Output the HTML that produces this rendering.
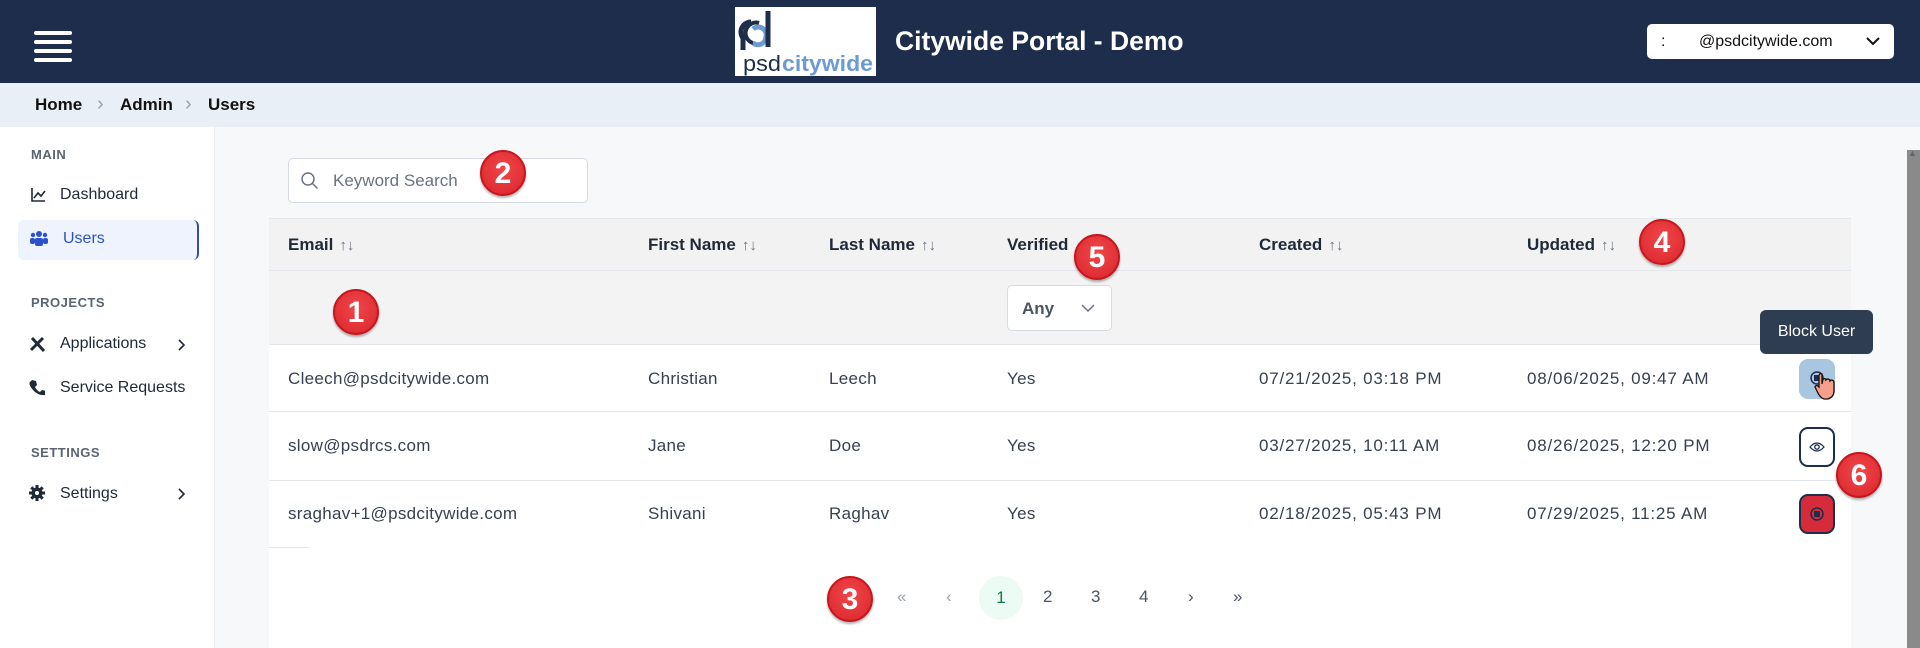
<!DOCTYPE html>
<html><head><meta charset="utf-8"><style>
*{box-sizing:border-box;margin:0;padding:0}
body{width:1920px;height:648px;overflow:hidden;background:#f7f8fa;font-family:"Liberation Sans",sans-serif;color:#1f2937;position:relative}
.abs{position:absolute}
.hdr{left:0;top:0;width:1920px;height:83px;background:#1d2d4b}
.bc{left:0;top:83px;width:1920px;height:44px;background:#e9eff6;font-size:17px;font-weight:bold;color:#111}
.side{left:0;top:127px;width:215px;height:521px;background:#fff;border-right:1px solid #eceef2}
.lbl{font-size:13px;color:#5b6472;font-weight:bold;letter-spacing:.5px}
.nav{font-size:16px;color:#1f2937}
.badge{width:46px;height:46px;border-radius:50%;background:radial-gradient(circle at 50% 40%,#f0464a,#d9262c);border:2px solid #c8161c;color:#fff;font-weight:bold;font-size:30px;text-align:center;line-height:44px;box-shadow:0 2px 2px rgba(0,0,0,.3)}
.th{font-size:17px;font-weight:bold;color:#1f2937}
.td{font-size:17px;color:#374151;letter-spacing:.3px}
.dt{letter-spacing:.8px}
.sort{color:#6b7280;font-weight:normal;font-size:15px;margin-left:6px}
.pg{font-size:17px;color:#4b5563}
.btn{width:36px;height:40px;border-radius:9px}
</style></head><body>
<div class="abs hdr"></div>
<div class="abs" style="left:34px;top:31px;width:38px">
<div style="height:4px;background:#fff;border-radius:2px;margin-bottom:5px"></div><div style="height:4px;background:#fff;border-radius:2px;margin-bottom:5px"></div><div style="height:4px;background:#fff;border-radius:2px;margin-bottom:5px"></div><div style="height:4px;background:#fff;border-radius:2px"></div></div>
<div class="abs" style="left:735px;top:7px;width:141px;height:69px;background:#fff">
<svg width="141" height="69" viewBox="0 0 141 69"><path d="M16 15a10 10 0 0 0-6 18" stroke="#1d2d4b" stroke-width="5" fill="none"/><path d="M8 30v13" stroke="#1d2d4b" stroke-width="5"/><path d="M18 22a8 8 0 0 1 13 8a8 8 0 0 1-13 6" stroke="#6b9bd1" stroke-width="5" fill="none"/><path d="M33 4v36" stroke="#1d2d4b" stroke-width="5"/><path d="M24 16a10 10 0 0 0-6 20" stroke="#1d2d4b" stroke-width="4" fill="none"/>
<text x="8" y="64" font-family="Liberation Sans" font-size="22" fill="#1d2d4b" textLength="38" lengthAdjust="spacingAndGlyphs">psd</text><text x="47" y="64" font-family="Liberation Sans" font-weight="bold" font-size="22" fill="#6b9bd1" textLength="91" lengthAdjust="spacingAndGlyphs">citywide</text></svg></div>
<div class="abs" style="left:895px;top:26px;color:#fff;font-size:26.5px;font-weight:bold">Citywide Portal - Demo</div>
<div class="abs" style="left:1647px;top:24px;width:247px;height:35px;background:#fff;border-radius:5px;font-size:16px;line-height:35px;color:#111"><span style="position:absolute;left:14px">:</span><span style="position:absolute;left:52px">@psdcitywide.com</span><svg class="abs" style="left:218px;top:11px" width="16" height="12"><path d="M2 3l6 6 6-6" stroke="#111" stroke-width="2" fill="none"/></svg></div>
<div class="abs bc"><span class="abs" style="left:35px;top:12px">Home</span><span class="abs" style="left:97px;top:10px;color:#9aa3ad;font-weight:normal;font-size:20px">›</span><span class="abs" style="left:120px;top:12px">Admin</span><span class="abs" style="left:185px;top:10px;color:#9aa3ad;font-weight:normal;font-size:20px">›</span><span class="abs" style="left:208px;top:12px">Users</span></div>
<div class="abs side"></div>
<div class="abs lbl" style="left:31px;top:147px">MAIN</div>
<svg class="abs" style="left:31px;top:187px" width="15" height="15"><path d="M1 1v13h13M3 11l4-5 3 3 4-5" stroke="#1f2937" stroke-width="1.6" fill="none"/></svg>
<div class="abs nav" style="left:60px;top:186px">Dashboard</div>
<div class="abs" style="left:18px;top:220px;width:181px;height:40px;background:#eef3fd;border-radius:6px;border-right:2px solid #2f4fb5"></div>
<svg class="abs" style="left:30px;top:230px" width="18" height="16"><circle cx="9" cy="4" r="3" fill="#2c52c9"/><circle cx="3" cy="5" r="2.2" fill="#2c52c9"/><circle cx="15" cy="5" r="2.2" fill="#2c52c9"/><rect x="5" y="8" width="8" height="8" rx="2" fill="#2c52c9"/><rect x="0" y="8" width="5" height="6" rx="2" fill="#2c52c9"/><rect x="13" y="8" width="5" height="6" rx="2" fill="#2c52c9"/></svg>
<div class="abs nav" style="left:63px;top:230px;color:#2c52c9">Users</div>
<div class="abs lbl" style="left:31px;top:295px">PROJECTS</div>
<svg class="abs" style="left:29px;top:336px" width="17" height="17"><path d="M3 2l12 13M14 2L2 14" stroke="#1f2937" stroke-width="3"/></svg>
<div class="abs nav" style="left:60px;top:335px">Applications</div>
<svg class="abs" style="left:177px;top:338px" width="10" height="14"><path d="M2 2l5 5-5 5" stroke="#1f2937" stroke-width="1.6" fill="none"/></svg>
<svg class="abs" style="left:29px;top:379px" width="16" height="17"><path d="M3 1l4 1 1 4-2 2q2 4 5 5l2-2 4 1v4q-8 1-13-5T1 3z" fill="#1f2937"/></svg>
<div class="abs nav" style="left:60px;top:379px">Service Requests</div>
<div class="abs lbl" style="left:31px;top:445px">SETTINGS</div>
<svg class="abs" style="left:29px;top:485px" width="16" height="16"><circle cx="8" cy="8" r="5.5" fill="#1f2937"/><path d="M8 0v16M0 8h16M2.3 2.3l11.4 11.4M13.7 2.3L2.3 13.7" stroke="#1f2937" stroke-width="3"/><circle cx="8" cy="8" r="2" fill="#fff"/></svg>
<div class="abs nav" style="left:60px;top:485px">Settings</div>
<svg class="abs" style="left:177px;top:487px" width="10" height="14"><path d="M2 2l5 5-5 5" stroke="#1f2937" stroke-width="1.6" fill="none"/></svg>

<div class="abs" style="left:288px;top:158px;width:300px;height:45px;background:#fff;border:1px solid #d6dbe3;border-radius:5px"></div>
<svg class="abs" style="left:300px;top:171px" width="20" height="20"><circle cx="8" cy="8" r="6" stroke="#6b7280" stroke-width="1.5" fill="none"/><path d="M12.5 12.5l5 5" stroke="#6b7280" stroke-width="1.5"/></svg>
<div class="abs" style="left:333px;top:171px;font-size:17px;color:#6b7280">Keyword Search</div>

<div class="abs" style="left:269px;top:218px;width:1582px;height:430px;background:#fff"></div>
<div class="abs" style="left:269px;top:218px;width:1582px;height:53px;background:#f2f2f3;border-top:1px solid #e3e6ea;border-bottom:1px solid #e3e6ea"></div>
<div class="abs" style="left:269px;top:271px;width:1582px;height:74px;background:#f3f3f4;border-bottom:1px solid #e3e6ea"></div>
<div class="abs" style="left:269px;top:411px;width:1582px;border-top:1px solid #e3e6ea"></div>
<div class="abs" style="left:269px;top:480px;width:1582px;border-top:1px solid #e3e6ea"></div>
<div class="abs" style="left:269px;top:547px;width:40px;border-top:1px solid #e3e6ea"></div>
<div class="abs th" style="left:288px;top:235px">Email<span class="sort">↑↓</span></div>
<div class="abs th" style="left:648px;top:235px">First Name<span class="sort">↑↓</span></div>
<div class="abs th" style="left:829px;top:235px">Last Name<span class="sort">↑↓</span></div>
<div class="abs th" style="left:1007px;top:235px">Verified</div>
<div class="abs th" style="left:1259px;top:235px">Created<span class="sort">↑↓</span></div>
<div class="abs th" style="left:1527px;top:235px">Updated<span class="sort">↑↓</span></div>
<div class="abs" style="left:1007px;top:285px;width:105px;height:46px;background:#fff;border:1px solid #d6dbe3;border-radius:5px"><span class="abs" style="left:14px;top:13px;font-size:17px;font-weight:bold;color:#4b5563">Any</span><svg class="abs" style="left:72px;top:17px" width="16" height="10"><path d="M2 2l6 6 6-6" stroke="#6b7280" stroke-width="1.5" fill="none"/></svg></div>

<div class="abs td" style="left:288px;top:369px">Cleech@psdcitywide.com</div><div class="abs td" style="left:648px;top:369px">Christian</div><div class="abs td" style="left:829px;top:369px">Leech</div><div class="abs td" style="left:1007px;top:369px">Yes</div><div class="abs td dt" style="left:1259px;top:369px">07/21/2025, 03:18 PM</div><div class="abs td dt" style="left:1527px;top:369px">08/06/2025, 09:47 AM</div>
<div class="abs td" style="left:288px;top:436px">slow@psdrcs.com</div><div class="abs td" style="left:648px;top:436px">Jane</div><div class="abs td" style="left:829px;top:436px">Doe</div><div class="abs td" style="left:1007px;top:436px">Yes</div><div class="abs td dt" style="left:1259px;top:436px">03/27/2025, 10:11 AM</div><div class="abs td dt" style="left:1527px;top:436px">08/26/2025, 12:20 PM</div>
<div class="abs td" style="left:288px;top:504px">sraghav+1@psdcitywide.com</div><div class="abs td" style="left:648px;top:504px">Shivani</div><div class="abs td" style="left:829px;top:504px">Raghav</div><div class="abs td" style="left:1007px;top:504px">Yes</div><div class="abs td dt" style="left:1259px;top:504px">02/18/2025, 05:43 PM</div><div class="abs td dt" style="left:1527px;top:504px">07/29/2025, 11:25 AM</div>

<div class="abs" style="left:1760px;top:310px;width:113px;height:44px;background:#2e3d52;border-radius:6px;color:#fff;font-size:16px;line-height:44px;text-align:center">Block User</div>
<div class="abs btn" style="left:1799px;top:359px;background:#a9c6e0"><svg width="36" height="40"><circle cx="18" cy="19" r="6" stroke="#1d2d4b" stroke-width="1.5" fill="none"/><rect x="15" y="16" width="6" height="6" fill="#1d2d4b"/></svg></div>
<svg class="abs" style="left:1814px;top:373px" width="22" height="28"><path d="M5 3q0-3 3-2v10l1-5q3-1 3 1l1-1q3 0 3 2l1-1q3 0 3 3v8q0 6-6 8h-4q-4-1-7-8l-2-4q1-3 4 0z" fill="#f6a08c" stroke="#111" stroke-width="1.3"/></svg>
<div class="abs btn" style="left:1799px;top:427px;background:#fff;border:2px solid #1d2d4b"><svg width="32" height="36"><path d="M9 18q7-8 14 0q-7 8-14 0z" stroke="#1d2d4b" stroke-width="1.3" fill="none"/><circle cx="16" cy="18" r="2.2" stroke="#1d2d4b" stroke-width="1.3" fill="none"/></svg></div>
<div class="abs btn" style="left:1799px;top:494px;background:#d62b3a;border:2px solid #1d2d4b"><svg width="32" height="36"><circle cx="16" cy="18" r="6" stroke="#1d2d4b" stroke-width="1.5" fill="none"/><rect x="13" y="15" width="6" height="6" fill="#1d2d4b"/></svg></div>

<div class="abs pg" style="left:897px;top:587px;color:#9ca3af">«</div>
<div class="abs pg" style="left:946px;top:587px;color:#9ca3af">‹</div>
<div class="abs" style="left:979px;top:576px;width:44px;height:44px;border-radius:50%;background:#ecfbf3;color:#0f7a4a;font-size:17px;text-align:center;line-height:44px">1</div>
<div class="abs pg" style="left:1043px;top:587px">2</div><div class="abs pg" style="left:1091px;top:587px">3</div><div class="abs pg" style="left:1139px;top:587px">4</div>
<div class="abs pg" style="left:1188px;top:587px">›</div><div class="abs pg" style="left:1233px;top:587px">»</div>

<div class="abs" style="left:1907px;top:150px;width:13px;height:498px;background:#8a8a8a"></div>
<div class="abs" style="left:1908px;top:148px;font-size:9px;color:#666">▲</div>

<div class="abs badge" style="left:333px;top:289px">1</div>
<div class="abs badge" style="left:480px;top:150px">2</div>
<div class="abs badge" style="left:827px;top:576px">3</div>
<div class="abs badge" style="left:1639px;top:219px">4</div>
<div class="abs badge" style="left:1074px;top:234px">5</div>
<div class="abs badge" style="left:1836px;top:452px">6</div>
</body></html>
